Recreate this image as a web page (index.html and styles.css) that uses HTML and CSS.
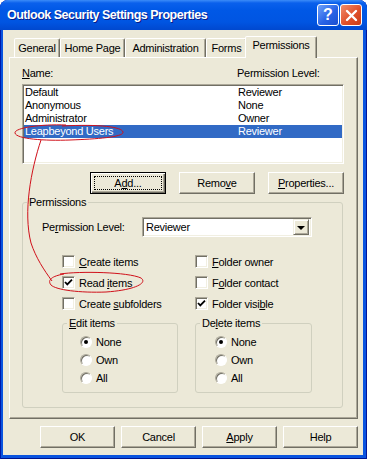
FILE: index.html
```html
<!DOCTYPE html>
<html lang="en">
<head>
    <meta charset="UTF-8">
    <title>Outlook Security Settings Properties</title>
    <link rel="stylesheet" href="styles.css">
</head>
<body>
    <div class="window">
        <div class="titlebar">
            <span class="title">Outlook Security Settings Properties</span>
            <div class="caption-buttons">
                <span class="cap-btn cap-help">?</span>
                <span class="cap-btn cap-close">
                    <svg width="13" height="13" viewBox="0 0 13 13"><path d="M2 2 L11 11 M11 2 L2 11" stroke="#fff" stroke-width="2.4" stroke-linecap="round"/></svg>
                </span>
            </div>
        </div>

        <div class="client">
            <div class="tabs">
                <span class="tab tab-general">General</span>
                <span class="tab tab-home">Home Page</span>
                <span class="tab tab-admin">Administration</span>
                <span class="tab tab-forms">Forms</span>
                <span class="tab tab-perm selected">Permissions</span>
            </div>

            <div class="pane">
                <div class="list-header">
                    <span class="col-name"><u>N</u>ame:</span>
                    <span>Permission Level:</span>
                </div>
                <div class="listbox">
                    <div class="row"><span class="col-name">Default</span><span>Reviewer</span></div>
                    <div class="row"><span class="col-name">Anonymous</span><span>None</span></div>
                    <div class="row"><span class="col-name">Administrator</span><span>Owner</span></div>
                    <div class="row selected"><span class="col-name">Leapbeyond Users</span><span>Reviewer</span></div>
                </div>

                <div class="list-buttons">
                    <button class="btn btn-default">A<u>d</u>d...</button>
                    <button class="btn">Remo<u>v</u>e</button>
                    <button class="btn"><u>P</u>roperties...</button>
                </div>

                <fieldset class="group group-main">
                    <legend>Permissions</legend>
                    <div class="level-row">
                        <span class="level-label">Pe<u>r</u>mission Level:</span>
                        <div class="combo">
                            <span class="combo-text">Reviewer</span>
                            <span class="combo-arrow"></span>
                        </div>
                    </div>

                    <div class="checks">
                        <div class="check"><span class="box"></span><span><u>C</u>reate items</span></div>
                        <div class="check"><span class="box"></span><span><u>F</u>older owner</span></div>
                        <div class="check"><span class="box checked"><svg width="9" height="9" viewBox="0 0 9 9"><path d="M1 4 L3.3 6.4 L8 1.6" fill="none" stroke="#000" stroke-width="1.8"/></svg></span><span>Read <u>i</u>tems</span></div>
                        <div class="check"><span class="box"></span><span>F<u>o</u>lder contact</span></div>
                        <div class="check"><span class="box"></span><span>Create <u>s</u>ubfolders</span></div>
                        <div class="check"><span class="box checked"><svg width="9" height="9" viewBox="0 0 9 9"><path d="M1 4 L3.3 6.4 L8 1.6" fill="none" stroke="#000" stroke-width="1.8"/></svg></span><span>Folder visi<u>b</u>le</span></div>
                    </div>

                    <div class="subgroups">
                        <fieldset class="group group-sub">
                            <legend><u>E</u>dit items</legend>
                            <div class="radios">
                                <div class="radio"><span class="dot on"></span><span>None</span></div>
                                <div class="radio"><span class="dot"></span><span>Own</span></div>
                                <div class="radio"><span class="dot"></span><span>All</span></div>
                            </div>
                        </fieldset>
                        <fieldset class="group group-sub group-delete">
                            <legend>De<u>l</u>ete items</legend>
                            <div class="radios">
                                <div class="radio"><span class="dot on"></span><span>None</span></div>
                                <div class="radio"><span class="dot"></span><span>Own</span></div>
                                <div class="radio"><span class="dot"></span><span>All</span></div>
                            </div>
                        </fieldset>
                    </div>
                </fieldset>
            </div>

            <div class="dialog-buttons">
                <button class="btn btn-wide">OK</button>
                <button class="btn btn-wide">Cancel</button>
                <button class="btn btn-wide"><u>A</u>pply</button>
                <button class="btn btn-wide">Help</button>
            </div>
        </div>

        <!-- red pen marks drawn over the dialog -->
        <svg class="annotation" width="367" height="459" viewBox="0 0 367 459">
            <path d="M66 125 C40 124 14 128 15 133 C16 139 45 141 70 140 C98 139 124 137 123 132 C122 127 100 124 62 126" fill="none" stroke="#D0101A" stroke-width="1"/>
            <path d="M41 140 C31 170 23 212 31 243 C36 258 44 270 52 281" fill="none" stroke="#D0101A" stroke-width="1"/>
            <path d="M60 274 C80 271 128 272 141 278 C148 283 135 290 106 292 C80 293 56 290 51 285 C47 280 52 276 64 274" fill="none" stroke="#D0101A" stroke-width="1"/>
        </svg>
    </div>
</body>
</html>
```

FILE: styles.css
```css
:root {
    --face: #ECE9D8;
    --shadow: #ACA899;
    --dark: #716F64;
    --light: #F1EFE2;
    --select: #316AC5;
}

* {
    box-sizing: border-box;
}

body {
    margin: 0;
    background: #fff;
    font-family: 'Liberation Sans', Arial, sans-serif;
    font-size: 11px;
    letter-spacing: -0.25px;
    color: #000;
}

u {
    text-decoration: underline;
    text-underline-offset: 1px;
}

.window {
    position: relative;
    width: 367px;
    height: 459px;
    display: flex;
    flex-direction: column;
    background: #0A54DF;
    border-radius: 8px 8px 0 0;
    box-shadow: inset 1px 0 #0019A8, inset -1px 0 #00169A, inset 0 -1px #00138C;
}

.titlebar {
    height: 30px;
    flex: none;
    display: flex;
    align-items: center;
    padding: 0 5px 0 7px;
    border-radius: 8px 8px 0 0;
    background: linear-gradient(#3C8CF8 0, #0A60EC 3px, #0058E6 10px, #0055E2 22px, #0048CF 30px);
}

.title {
    flex: 1;
    color: #fff;
    font-weight: bold;
    font-size: 12.5px;
    letter-spacing: -0.5px;
    text-shadow: 1px 1px #0A1C86;
}

.caption-buttons {
    display: flex;
    gap: 1px;
}

.cap-btn {
    width: 22px;
    height: 22px;
    border: 1px solid #fff;
    border-radius: 3px;
    display: flex;
    align-items: center;
    justify-content: center;
    color: #fff;
    font-weight: bold;
    font-size: 16px;
    letter-spacing: 0;
}

.cap-help {
    background: linear-gradient(135deg, #6FA2FA, #2863E6 55%, #1B4FD0);
}

.cap-close {
    background: linear-gradient(135deg, #F08D6D, #E0502A 55%, #C63C18);
}

.client {
    flex: 1;
    margin: 0 4px 4px 3px;
    padding: 6px 5px 0 6px;
    background: var(--face);
}

/* tabs */

.tabs {
    height: 21px;
    display: flex;
    align-items: flex-end;
    padding-left: 5px;
}

.tab {
    height: 19px;
    display: flex;
    justify-content: center;
    padding-top: 3px;
    border: 1px solid;
    border-bottom: none;
    border-color: #fff var(--dark) transparent #fff;
    border-radius: 2px 2px 0 0;
    box-shadow: inset -1px 0 var(--shadow);
    background: var(--face);
}

.tab-general { width: 46px; }
.tab-home { width: 65px; }
.tab-admin { width: 81px; }
.tab-forms { width: 41px; }

.tab-perm {
    width: 72px;
    height: 22px;
    margin: 0 -2px -1px -2px;
    padding-top: 2px;
    position: relative;
}

/* tab page */

.pane {
    height: 362px;
    padding: 9px 0 0 12px;
    border: 1px solid;
    border-color: #fff var(--dark) var(--dark) #fff;
    box-shadow: inset -1px -1px var(--shadow);
}

.list-header {
    display: flex;
    height: 13px;
    line-height: 13px;
}

.list-header .col-name {
    width: 215px;
}

.listbox {
    width: 322px;
    height: 80px;
    margin-top: 4px;
    background: #fff;
    border: 1px solid;
    border-color: var(--shadow) #fff #fff var(--shadow);
    box-shadow: inset 1px 1px var(--dark), inset -1px -1px var(--light);
    padding: 1px 1px 0 1px;
}

.row {
    display: flex;
    height: 13px;
    line-height: 13px;
    padding-left: 1px;
}

.row .col-name {
    width: 213px;
}

.row.selected {
    background: var(--select);
    color: #fff;
}

/* buttons */

.btn {
    height: 22px;
    padding: 0;
    font: inherit;
    letter-spacing: inherit;
    color: #000;
    background: var(--face);
    border: 1px solid;
    border-color: #fff var(--dark) var(--dark) #fff;
    box-shadow: inset -1px -1px var(--shadow);
}

.list-buttons {
    width: 322px;
    display: flex;
    justify-content: flex-end;
    gap: 13px;
    margin-top: 8px;
}

.list-buttons .btn {
    width: 76px;
}

.btn-default {
    position: relative;
    border-color: #000;
    box-shadow: inset 1px 1px #fff, inset -1px -1px var(--dark), inset -2px -2px var(--shadow);
}

.btn-default::after {
    content: "";
    position: absolute;
    inset: 3px;
    border: 1px dotted #000;
}

/* group boxes */

.group {
    margin: 0;
    padding: 0;
    border: 1px solid #D0D0BF;
    border-radius: 3px;
}

.group legend {
    margin-left: 4px;
    padding: 0 2px;
    line-height: 13px;
}

.group-main {
    width: 321px;
    height: 212px;
    margin-top: 2px;
}

.level-row {
    display: flex;
    align-items: center;
    margin-top: 8px;
    padding-left: 19px;
}

.level-label {
    width: 100px;
}

.combo {
    width: 170px;
    height: 20px;
    display: flex;
    align-items: center;
    justify-content: space-between;
    padding: 0 2px 0 3px;
    background: #fff;
    border: 1px solid;
    border-color: var(--shadow) #fff #fff var(--shadow);
    box-shadow: inset 1px 1px var(--dark), inset -1px -1px var(--light);
}

.combo-arrow {
    width: 16px;
    height: 16px;
    display: flex;
    align-items: center;
    justify-content: center;
    background: var(--face);
    border: 1px solid;
    border-color: var(--light) var(--dark) var(--dark) var(--light);
    box-shadow: inset 1px 1px #fff, inset -1px -1px var(--shadow);
}

.combo-arrow::before {
    content: "";
    border-left: 4px solid transparent;
    border-right: 4px solid transparent;
    border-top: 4px solid #000;
    margin-top: 1px;
}

.checks {
    display: grid;
    grid-template-columns: 133px 120px;
    row-gap: 8px;
    margin-top: 18px;
    padding-left: 39px;
}

.check {
    display: flex;
    align-items: center;
    gap: 4px;
    height: 13px;
}

.box {
    width: 13px;
    height: 13px;
    display: flex;
    align-items: center;
    justify-content: center;
    background: #fff;
    border: 1px solid;
    border-color: var(--shadow) #fff #fff var(--shadow);
    box-shadow: inset 1px 1px var(--dark), inset -1px -1px var(--light);
}

.subgroups {
    display: flex;
    gap: 17px;
    margin-top: 7px;
    padding-left: 39px;
}

.group-sub {
    width: 116px;
    height: 76px;
}

.group-delete {
    width: 117px;
}

.radios {
    display: flex;
    flex-direction: column;
    gap: 6px;
    margin-top: 6px;
    padding-left: 17px;
}

.group-delete .radios {
    padding-left: 19px;
}

.radio {
    display: flex;
    align-items: center;
    gap: 4px;
    height: 12px;
}

.dot {
    width: 12px;
    height: 12px;
    display: flex;
    align-items: center;
    justify-content: center;
    border-radius: 50%;
    background: #fff;
    border: 1px solid;
    border-color: var(--shadow) #fff #fff var(--shadow);
    box-shadow: inset 1px 1px var(--dark);
}

.dot.on::before {
    content: "";
    width: 4px;
    height: 4px;
    border-radius: 50%;
    background: #000;
}

/* bottom buttons */

.dialog-buttons {
    display: flex;
    justify-content: flex-end;
    gap: 6px;
    margin-top: 7px;
}

.btn-wide {
    width: 75px;
}

.annotation {
    position: absolute;
    top: 0;
    left: 0;
    pointer-events: none;
}
```
